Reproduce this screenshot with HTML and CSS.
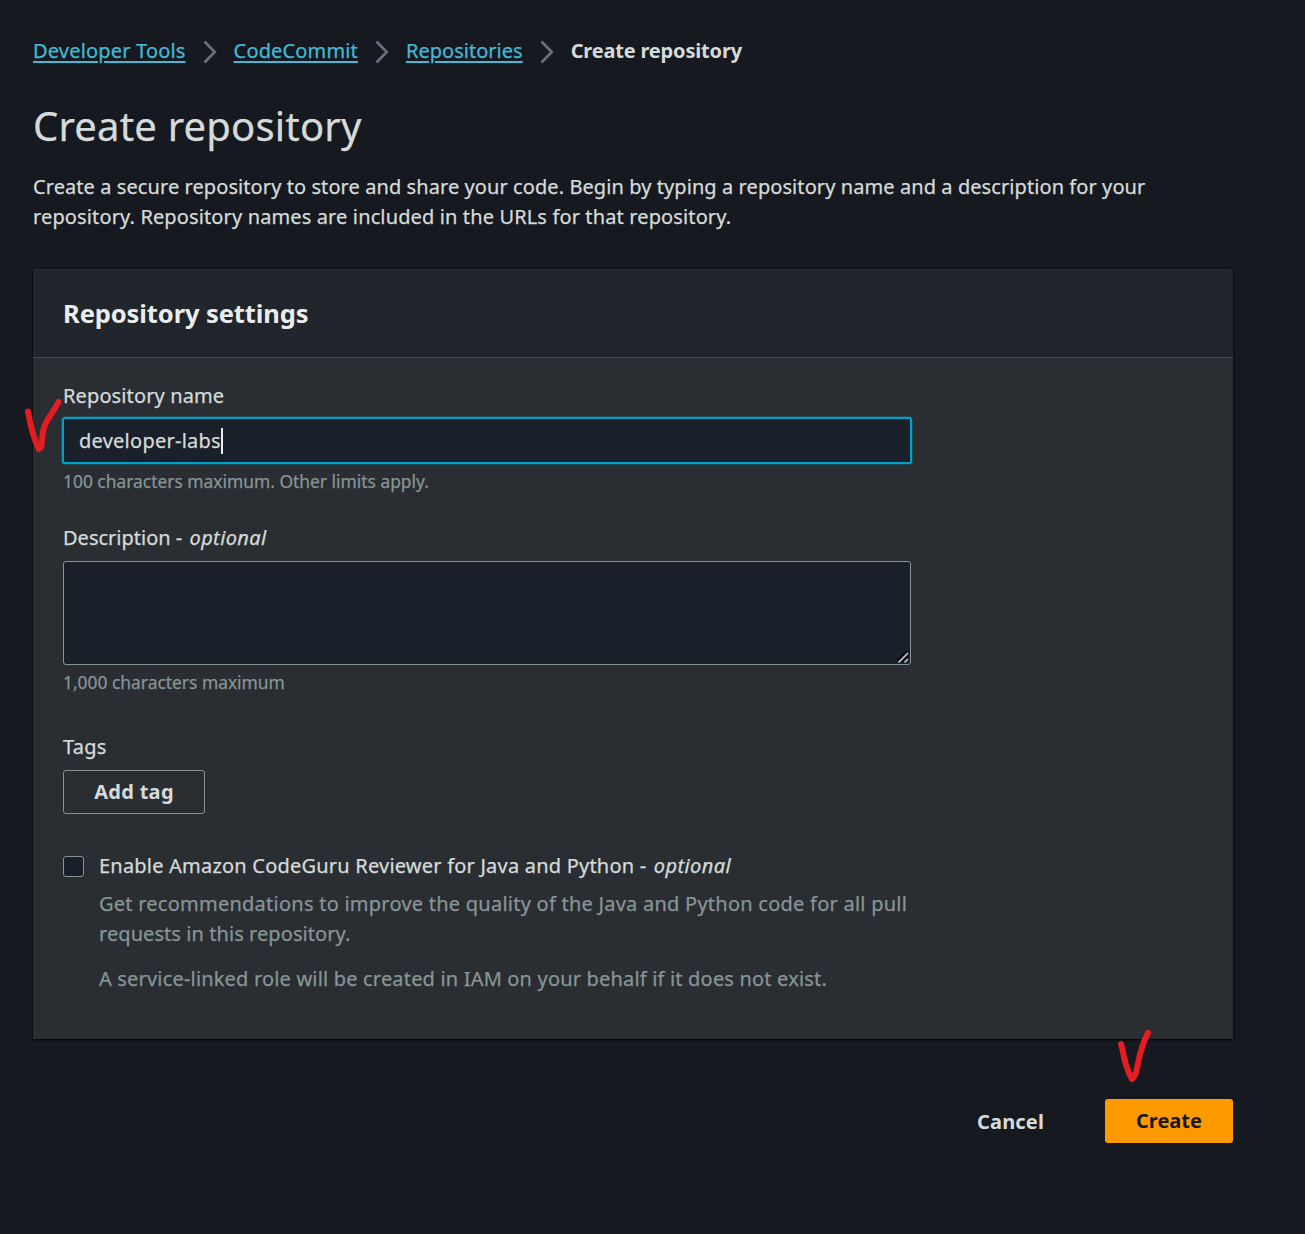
FILE: index.html
```html
<!DOCTYPE html>
<html lang="en">
<head>
<meta charset="utf-8">
<title>Create repository</title>
<link rel="stylesheet" href="styles.css">
</head>
<body>
<main class="page">
  <nav class="breadcrumbs">
    <a class="crumb-tools" href="#">Developer Tools</a>
    <svg class="chevron" viewBox="0 0 14 24"><path d="M1.5 1.5 11.8 12 1.5 22.5"/></svg>
    <a class="crumb-commit" href="#">CodeCommit</a>
    <svg class="chevron" viewBox="0 0 14 24"><path d="M1.5 1.5 11.8 12 1.5 22.5"/></svg>
    <a class="crumb-repos" href="#">Repositories</a>
    <svg class="chevron" viewBox="0 0 14 24"><path d="M1.5 1.5 11.8 12 1.5 22.5"/></svg>
    <b class="crumb-current">Create repository</b>
  </nav>
  <h1 class="title">Create repository</h1>
  <p class="intro"><span class="intro-first">Create a secure repository to store and share your code. Begin by typing a repository name and a description for your</span><br><span class="intro-second">repository. Repository names are included in the URLs for that repository.</span></p>

  <section class="card">
    <header class="card-header"><h2>Repository settings</h2></header>
    <div class="card-body">
      <label class="label label-name">Repository name</label>
      <div class="input"><span>developer-labs</span><i class="caret"></i></div>
      <div class="hint">100 characters maximum. Other limits apply.</div>

      <label class="label label-desc">Description - <em>optional</em></label>
      <div class="textarea"><svg class="grip" viewBox="0 0 12 12"><path class="grip-shade" d="M0 10 10 0M5 11 11 5"/><path d="M1.5 11.5 11 2M7.5 11.5 11 8"/></svg></div>
      <div class="hint">1,000 characters maximum</div>

      <div class="label label-tags">Tags</div>
      <button class="button add-tag">Add tag</button>

      <div class="option">
        <span class="checkbox"></span>
        <div class="option-text">
          <div class="option-label">Enable Amazon CodeGuru Reviewer for Java and Python - <em>optional</em></div>
          <p class="option-info"><span class="info-first">Get recommendations to improve the quality of the Java and Python code for all pull</span><br><span class="info-second">requests in this repository.</span></p>
          <p class="option-role">A service-linked role will be created in IAM on your behalf if it does not exist.</p>
        </div>
      </div>
    </div>
  </section>

  <footer class="actions">
    <button class="button cancel">Cancel</button>
    <button class="button create">Create</button>
  </footer>
</main>
<svg class="mark mark-name" viewBox="0 0 40 60"><path d="M4 14.500C6 26 9 41 15 52C20 50 16 38 21.500 27C25 19 30 14 34.500 5"/></svg>
<svg class="mark mark-create" viewBox="0 0 40 60"><path d="M6 19C9 27 8 38 17 54C24 50 21 30 33 8"/></svg>
</body>
</html>
```
FILE: styles.css
```css
* { box-sizing: border-box; }
body {
  margin: 0;
  min-height: 1234px;
  background: #16191f;
  color: #d5dbdb;
  font: 20px/30px "Noto Sans", "Open Sans", sans-serif;
  -webkit-text-stroke: .25px;
  white-space: nowrap;
  position: relative;
}
h1, h2, p { margin: 0; }
em { margin-left: 2px; letter-spacing: .4px; }
.page { width: 1233px; padding: 36px 0 0 33px; }
.breadcrumbs { display: flex; align-items: center; height: 30px; }
.breadcrumbs a { color: #44b9d6; text-underline-offset: 3px; text-decoration-thickness: 2px; }
.crumb-tools { letter-spacing: .18px; }
.crumb-commit { letter-spacing: .15px; }
.crumb-repos { letter-spacing: .02px; }
.crumb-current { letter-spacing: -.18px; -webkit-text-stroke: 0; }
.chevron { width: 14px; height: 24px; margin: 2px 17px 0; fill: none; stroke: #687078; stroke-width: 2.7; }
.title { margin-top: 30px; font-size: 40px; line-height: 60px; font-weight: 400; letter-spacing: .18px; }
.intro { margin-top: 16px; }
.intro-first { letter-spacing: .08px; }
.intro-second { letter-spacing: .13px; }
.card {
  margin-top: 37px;
  height: 770px;
  background: #2a2e33;
  box-shadow: 0 1px 2px rgba(0, 0, 0, .7), 0 0 2px rgba(0, 0, 0, .5);
}
.card-header { height: 89px; padding: 24px 30px; background: #21252c; border-top: 1px solid #2a2e33; border-bottom: 1px solid #444a50; }
h2 { font-size: 25.5px; line-height: 38px; font-weight: 700; letter-spacing: -.1px; color: #eaeded; -webkit-text-stroke: 0; }
.card-body { padding: 23px 30px 0; }
.label { display: block; height: 30px; }
.label-name { letter-spacing: .12px; }
.input {
  display: flex;
  align-items: center;
  width: 850px;
  height: 47px;
  margin: 6px 0 0 -1px;
  padding-left: 15px;
  border: 2px solid #00a1c9;
  box-shadow: 0 0 0 .5px rgba(0, 161, 201, .5);
  border-radius: 3px;
  background: #1a2029;
  letter-spacing: .25px;
}
.caret { width: 2px; height: 26px; background: #eaeded; }
.hint { margin-top: 5px; height: 25px; font-size: 17.4px; line-height: 24px; color: #879596; }
.label-desc { margin-top: 29px; }
.textarea {
  display: flex;
  align-items: flex-end;
  justify-content: flex-end;
  width: 848px;
  height: 104px;
  margin-top: 8px;
  padding: 1px;
  border: 1px solid #879596;
  border-radius: 3px;
  background: #1a2029;
}
.grip { width: 12px; height: 12px; fill: none; stroke: #c5c8ca; stroke-width: 1.7; }
.grip-shade { stroke: #050608; }
.label-tags { margin-top: 37px; letter-spacing: .25px; }
.button {
  display: flex;
  align-items: center;
  justify-content: center;
  height: 44px;
  padding: 0;
  border: 0;
  border-radius: 3px;
  background: none;
  color: #d5dbdb;
  font: 700 20px/30px "Noto Sans", "Open Sans", sans-serif;
  -webkit-text-stroke: 0;
}
.add-tag { width: 142px; margin-top: 8px; border: 1px solid #879596; letter-spacing: .3px; }
.option { display: flex; gap: 15px; margin-top: 37px; }
.checkbox { width: 21px; height: 21px; margin-top: 5px; border: 1px solid #879596; border-radius: 3px; background: #1a2029; }
.option-label { letter-spacing: .21px; }
.option-info { margin-top: 8px; color: #879596; }
.info-first { letter-spacing: .245px; }
.info-second { letter-spacing: .07px; }
.option-role { margin-top: 15px; color: #879596; letter-spacing: .18px; }
.actions { display: flex; justify-content: flex-end; gap: 61px; margin-top: 60px; }
.cancel { padding-top: 1px; letter-spacing: .15px; }
.create { width: 128px; background: #ff9900; color: #16191f; }
.mark { position: absolute; width: 40px; height: 60px; fill: none; stroke: #e51c20; stroke-width: 6; stroke-linecap: round; stroke-linejoin: round; }
.mark-name { left: 24px; top: 397px; }
.mark-create { left: 1115px; top: 1025px; }
```
